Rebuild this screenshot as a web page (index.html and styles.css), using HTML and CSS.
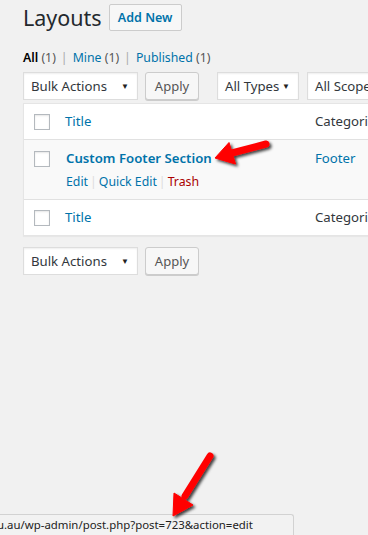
FILE: index.html
```html
<!DOCTYPE html>
<html lang="en">
<head>
    <meta charset="UTF-8">
    <meta name="viewport" content="width=device-width, initial-scale=1.0">
    <title>Layouts</title>
    <link rel="stylesheet" href="styles.css">
</head>
<body>

<div class="wrap">
    <div class="head">
        <h1>Layouts</h1>
        <a class="page-title-action" href="#">Add New</a>
    </div>

    <ul class="subsubsub">
        <li class="current">All <span class="count">(1)</span></li>
        <li class="sep">|</li>
        <li><a href="#">Mine <span class="count">(1)</span></a></li>
        <li class="sep">|</li>
        <li><a href="#">Published <span class="count">(1)</span></a></li>
    </ul>

    <div class="tablenav">
        <div class="select bulk">Bulk Actions <span class="caret">&#9660;</span></div>
        <button class="button">Apply</button>
        <div class="select types">All Types <span class="caret">&#9660;</span></div>
        <div class="select scope">All Scopes <span class="caret">&#9660;</span></div>
    </div>

    <div class="table">
        <div class="row head-row">
            <div class="check"><span class="box"></span></div>
            <div class="title"><a href="#">Title</a></div>
            <div class="cat">Categories</div>
        </div>
        <div class="row item-row">
            <div class="check"><span class="box"></span></div>
            <div class="title">
                <a class="row-title" href="#">Custom Footer Section</a>
                <div class="row-actions">
                    <a href="#">Edit</a><span class="bar">|</span><a href="#">Quick Edit</a><span class="bar">|</span><a class="trash" href="#">Trash</a>
                </div>
            </div>
            <div class="cat"><a href="#">Footer</a></div>
        </div>
        <div class="row foot-row">
            <div class="check"><span class="box"></span></div>
            <div class="title"><a href="#">Title</a></div>
            <div class="cat">Categories</div>
        </div>
    </div>

    <div class="tablenav bottom">
        <div class="select bulk">Bulk Actions <span class="caret">&#9660;</span></div>
        <button class="button">Apply</button>
    </div>
</div>

<div class="statusbar">u.au/wp-admin/post.php?post=723&amp;action=edit</div>

<svg class="arrows" width="368" height="535" viewBox="0 0 368 535">
    <defs>
        <filter id="shade" x="-30%" y="-30%" width="160%" height="160%">
            <feDropShadow dx="2" dy="2" stdDeviation="1.5" flood-color="#000" flood-opacity="0.75"/>
        </filter>
    </defs>
    <g fill="#f00" stroke="#f00" filter="url(#shade)">
        <line x1="266" y1="144" x2="230" y2="153.5" stroke-width="7" stroke-linecap="round"/>
        <polygon points="215,158 235.5,164 229,142.5" stroke-width="1" stroke-linejoin="round"/>
        <line x1="210" y1="456" x2="185" y2="496" stroke-width="7" stroke-linecap="round"/>
        <polygon points="173,516 193,505 174,493" stroke-width="1" stroke-linejoin="round"/>
    </g>
</svg>

</body>
</html>
```

FILE: styles.css
```css
body, html {
    margin: 0;
    padding: 0;
    height: 100%;
    overflow: hidden;
}
body {
    background: #f1f1f1;
    color: #444;
    font-family: "Noto Sans", "Open Sans", sans-serif;
    font-size: 12.3px;
    position: relative;
}
a {
    color: #0073aa;
    text-decoration: none;
}
.wrap {
    padding-left: 23px;
    width: 460px;
}
.head {
    display: flex;
    align-items: center;
    height: 27px;
    margin-top: 4px;
}
.head h1 {
    margin: 0 7px 0 0;
    font-size: 21.5px;
    font-weight: 400;
    color: #23282d;
    line-height: 27px;
}
.page-title-action {
    display: block;
    box-sizing: border-box;
    width: 73px;
    height: 27px;
    line-height: 25px;
    text-align: center;
    border: 1px solid #ccc;
    border-radius: 2px;
    background: #f7f7f7;
    font-size: 12.5px;
    font-weight: 600;
}
.subsubsub {
    list-style: none;
    margin: 18px 0 0;
    padding: 0;
    display: flex;
    line-height: 17px;
    color: #666;
}
.subsubsub li.current {
    color: #000;
    font-weight: 600;
}
.subsubsub .count {
    color: #555;
    font-weight: 400;
}
.subsubsub .sep {
    color: #aaa;
    padding: 0 5px;
}
.tablenav {
    display: flex;
    height: 28px;
    margin-top: 6px;
}
.tablenav.bottom {
    margin-top: 11px;
}
.select {
    box-sizing: border-box;
    height: 28px;
    line-height: 26px;
    padding: 0 7px;
    border: 1px solid #ddd;
    background: #fff;
    box-shadow: inset 0 1px 2px rgba(0,0,0,.07);
    color: #32373c;
    font-size: 13.2px;
    position: relative;
    white-space: nowrap;
    overflow: hidden;
}
.select .caret {
    position: absolute;
    right: 8px;
    top: 0;
    font-size: 8px;
    color: #222;
}
.select.bulk {
    width: 115px;
}
.select.types {
    width: 82px;
    margin-left: 18px;
}
.select.scope {
    width: 110px;
    margin-left: 8px;
}
.button {
    box-sizing: border-box;
    width: 54px;
    height: 28px;
    margin-left: 7px;
    padding: 0;
    border: 1px solid #ccc;
    border-radius: 3px;
    background: #f7f7f7;
    box-shadow: 0 1px 0 #ccc;
    color: #555;
    font-family: inherit;
    font-size: 13px;
}
.table {
    margin-top: 3px;
    background: #fff;
    border: 1px solid #e5e5e5;
    box-shadow: 0 1px 1px rgba(0,0,0,.04);
}
.row {
    display: flex;
}
.head-row, .foot-row {
    height: 35px;
    font-size: 13.2px;
}
.head-row {
    border-bottom: 1px solid #e1e1e1;
}
.foot-row {
    border-top: 1px solid #e1e1e1;
}
.item-row {
    height: 59px;
    background: #f9f9f9;
}
.check {
    width: 33px;
    padding: 10px 0 0 10px;
    box-sizing: border-box;
}
.item-row .check {
    padding-top: 11px;
}
.box {
    display: block;
    box-sizing: border-box;
    width: 16px;
    height: 16px;
    border: 1px solid #b4b9be;
    background: #fff;
    box-shadow: inset 0 1px 2px rgba(0,0,0,.1);
}
.title {
    width: 242px;
    padding-left: 8px;
    line-height: 35px;
}
.cat {
    padding-left: 8px;
    line-height: 35px;
    color: #32373c;
    white-space: nowrap;
}
.item-row .title, .item-row .cat {
    line-height: 20px;
    padding-top: 8px;
}
.row-title {
    display: block;
    padding-left: 1px;
    font-size: 13.2px;
    font-weight: 600;
}
.row-actions {
    margin-top: 4px;
    padding-left: 1px;
    font-size: 12.3px;
    color: #ddd;
}
.row-actions .bar {
    padding: 0 2px;
}
.row-actions .trash {
    color: #a00;
}
.item-row .cat a {
    font-size: 13.2px;
}
.statusbar {
    position: absolute;
    left: 0;
    bottom: 0;
    box-sizing: border-box;
    width: 294px;
    height: 21px;
    text-indent: -3px;
    line-height: 20px;
    border-top: 1px solid #d2d2d2;
    border-right: 1px solid #d2d2d2;
    border-top-right-radius: 3px;
    background: #f2f2f2;
    color: #222;
    font-size: 11.4px;
    overflow: hidden;
    white-space: nowrap;
}
.arrows {
    position: absolute;
    left: 0;
    top: 0;
    pointer-events: none;
}
```
